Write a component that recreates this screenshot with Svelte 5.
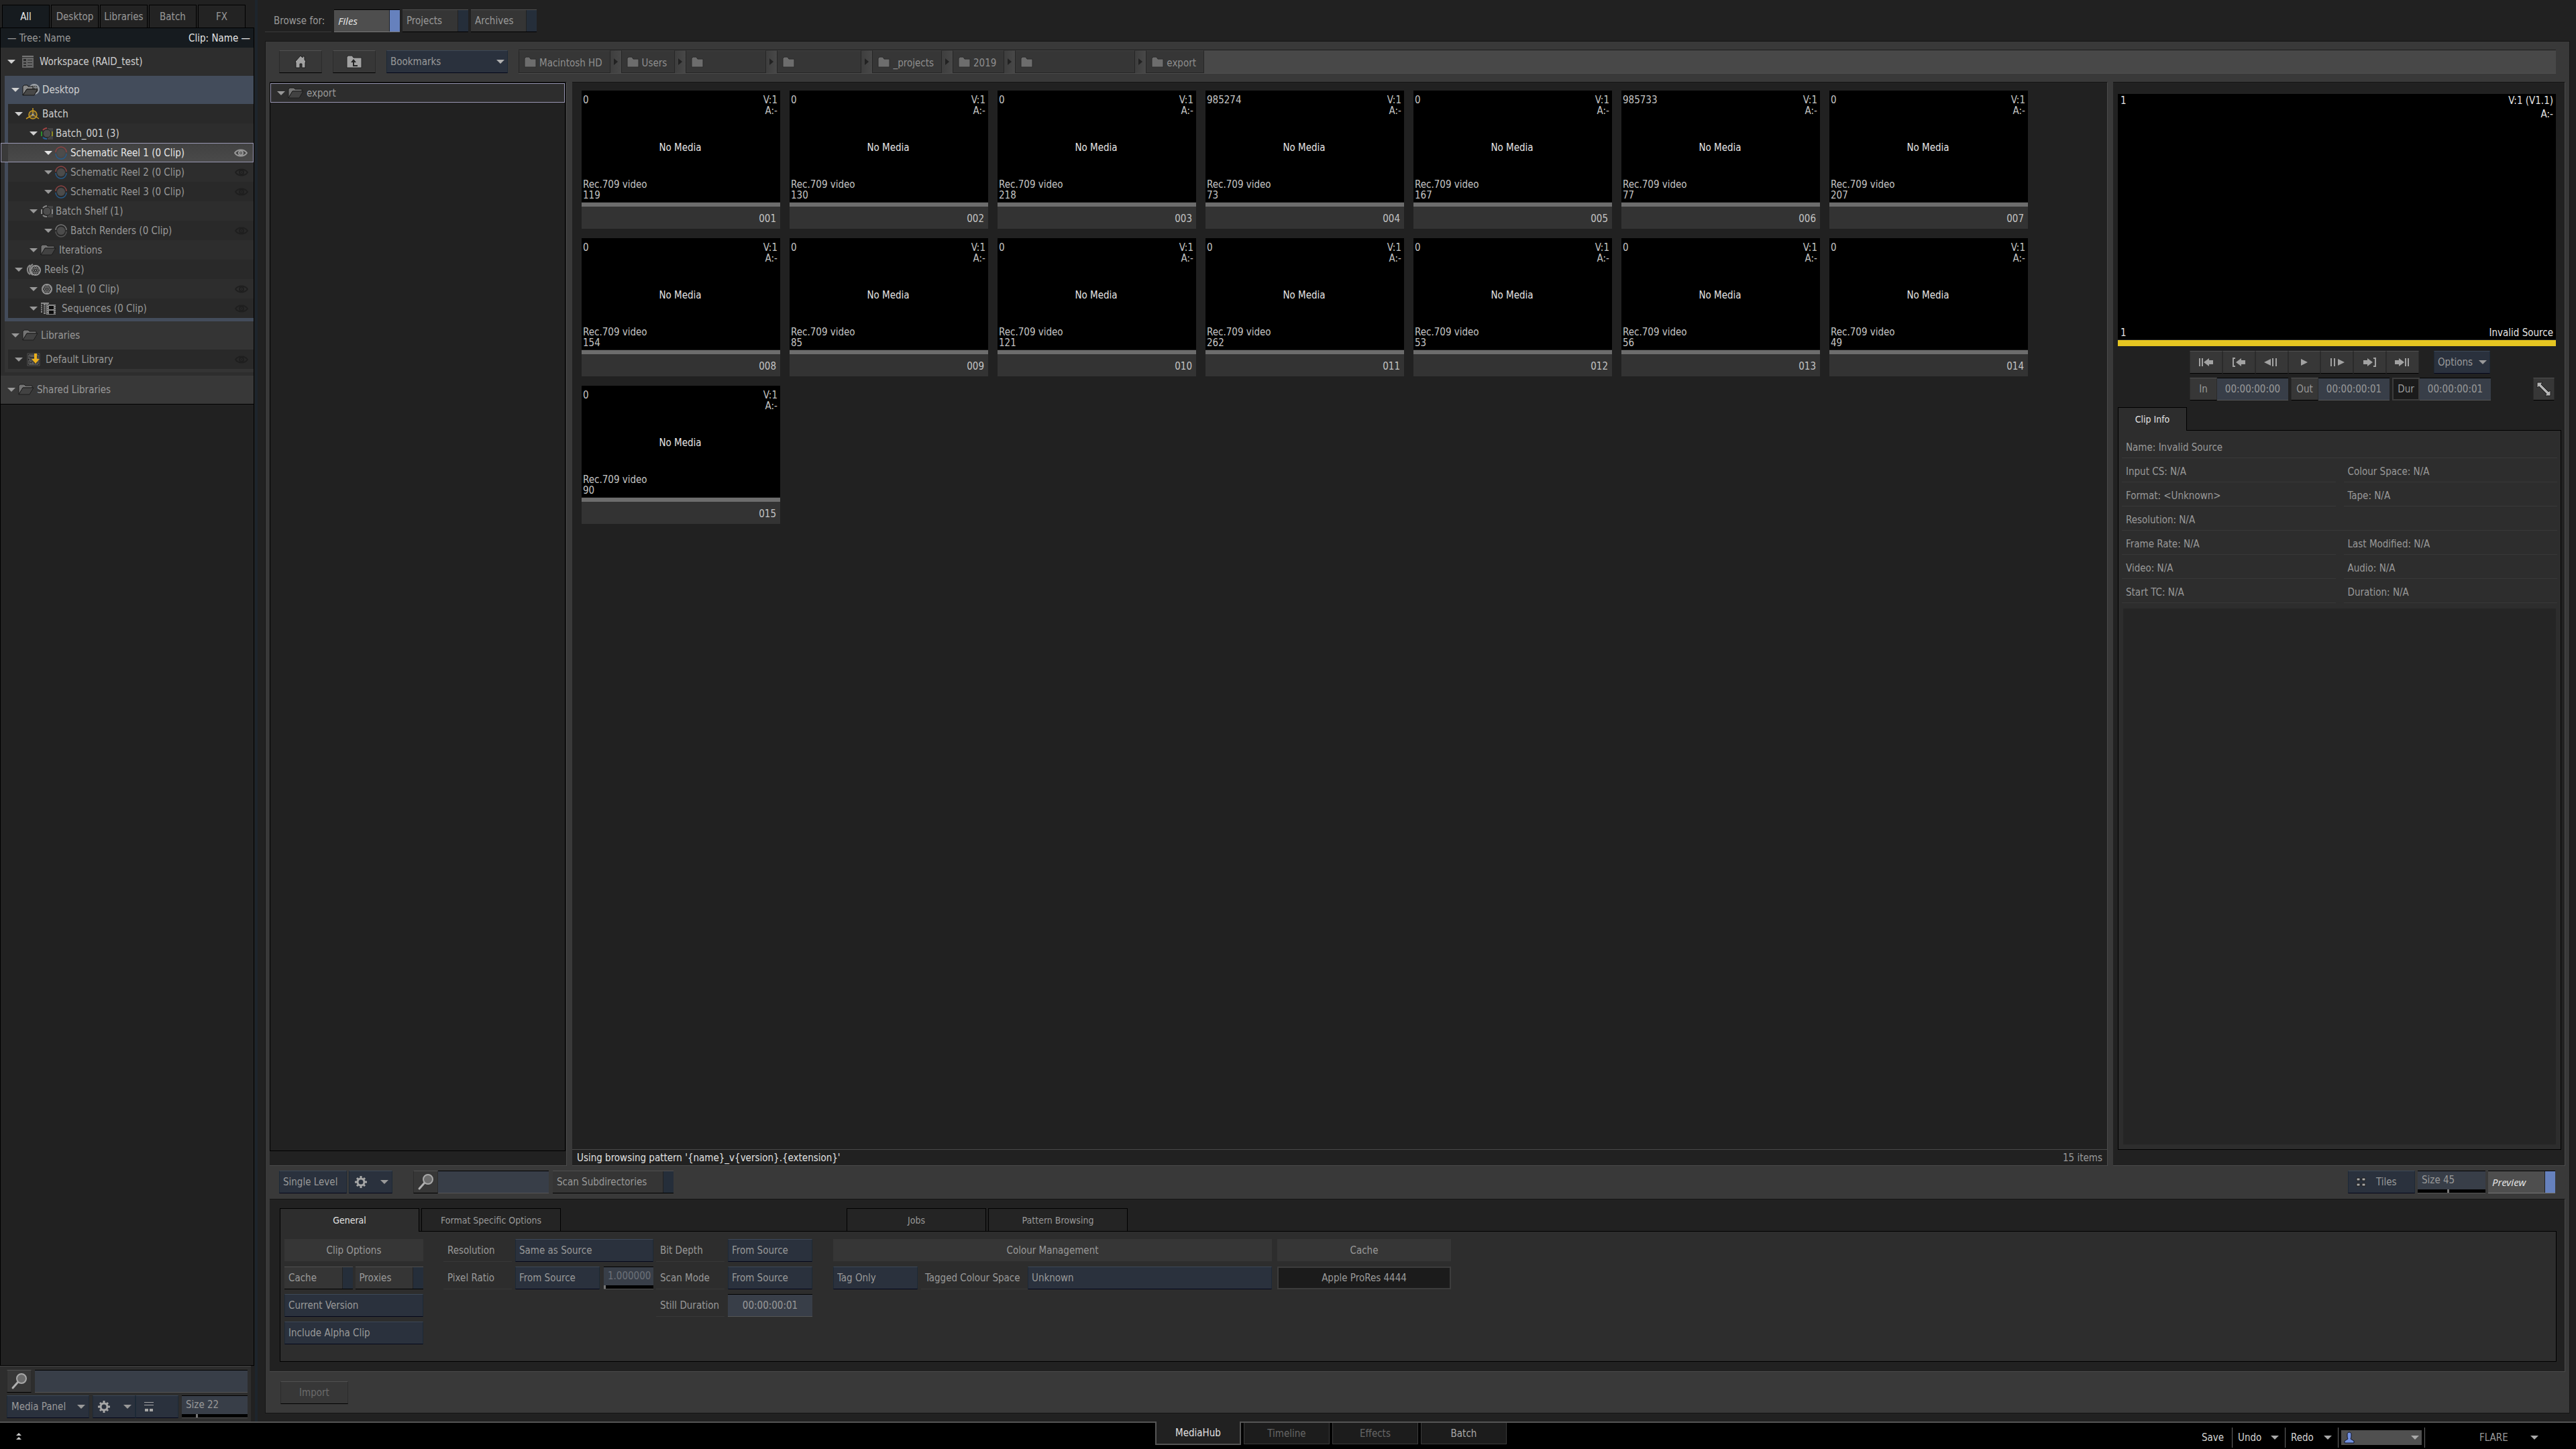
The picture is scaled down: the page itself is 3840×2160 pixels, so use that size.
<script lang="ts">
  type Node = { label: string; icon: string; pad: number; iconWidth: number; tone?: string; eye?: boolean };

  const panelTabs = ['All', 'Desktop', 'Libraries', 'Batch', 'FX'];

  const desktopRows: Node[] = [
    { label: 'Batch', icon: 'batch', pad: 10, iconWidth: 21, tone: 'bright' },
    { label: 'Batch_001 (3)', icon: 'group', pad: 32, iconWidth: 19, tone: 'bright' },
    { label: 'Schematic Reel 1 (0 Clip)', icon: 'schematic', pad: 54, iconWidth: 19, tone: 'selected', eye: true },
    { label: 'Schematic Reel 2 (0 Clip)', icon: 'schematic', pad: 54, iconWidth: 19, eye: true },
    { label: 'Schematic Reel 3 (0 Clip)', icon: 'schematic', pad: 54, iconWidth: 19, eye: true },
    { label: 'Batch Shelf (1)', icon: 'shelf', pad: 32, iconWidth: 19 },
    { label: 'Batch Renders (0 Clip)', icon: 'render', pad: 54, iconWidth: 19, eye: true },
    { label: 'Iterations', icon: 'folder', pad: 32, iconWidth: 24 },
    { label: 'Reels (2)', icon: 'reels', pad: 10, iconWidth: 24 },
    { label: 'Reel 1 (0 Clip)', icon: 'reel', pad: 32, iconWidth: 19, eye: true },
    { label: 'Sequences (0 Clip)', icon: 'sequence', pad: 32, iconWidth: 28, eye: true }
  ];

  const crumbs = [
    { name: 'Macintosh HD' },
    { name: 'Users' },
    { name: '', width: 120 },
    { name: '', width: 126 },
    { name: '_projects' },
    { name: '2019' },
    { name: '', width: 179 },
    { name: 'export' }
  ];

  const clips = [
    ['0', 119], ['0', 130], ['0', 218], ['985274', 73], ['0', 167], ['985733', 77], ['0', 207],
    ['0', 154], ['0', 85], ['0', 121], ['0', 262], ['0', 53], ['0', 56], ['0', 49], ['0', 90]
  ].map(([start, frames], i) => ({ start, frames, name: String(i + 1).padStart(3, '0') }));

  const info = [
    ['Name: Invalid Source'],
    ['Input CS: N/A', 'Colour Space: N/A'],
    ['Format: <Unknown>', 'Tape: N/A'],
    ['Resolution: N/A'],
    ['Frame Rate: N/A', 'Last Modified: N/A'],
    ['Video: N/A', 'Audio: N/A'],
    ['Start TC: N/A', 'Duration: N/A']
  ];

  const transport = [
    { label: 'Go to start', d: 'M4 5h2v12H4zM8 5h2v12H8zM11 11l8-6v3h6v6h-6v3z' },
    { label: 'Go to in', d: 'M5 4h4v2H7v10h2v2H5zM10 11l8-6v3h6v6h-6v3z' },
    { label: 'Step back', d: 'M3 11l10-5v10zM15 5h2v12h-2zM20 5h2v12h-2z' },
    { label: 'Play', d: 'M9 6l10 5-10 5z' },
    { label: 'Step forward', d: 'M4 5h2v12H4zM9 5h2v12H9zM15 6l10 5-10 5z' },
    { label: 'Go to out', d: 'M4 8h6V5l8 6-8 6v-3H4zM19 4h4v14h-4v-2h2V6h-2z' },
    { label: 'Go to end', d: 'M2 8h6V5l8 6-8 6v-3H2zM17 5h2v12h-2zM21 5h2v12h-2z' }
  ];

  const modules = ['MediaHub', 'Timeline', 'Effects', 'Batch'];

  let source = $state('Files');
  let scan = $state(false);
  let preview = $state(true);
  let cache = $state(false);
  let proxies = $state(false);
  let panelSize = $state(22);
  let tileSize = $state(45);
</script>

{#snippet caret()}
  <svg class="caret" viewBox="0 0 12 6" width="12" height="6"><path d="M0 0h12L6 6z" fill="currentColor" /></svg>
{/snippet}

{#snippet reelWheel(cx: number, cy: number)}
  <circle {cx} {cy} r="7" fill="#222" stroke="#969696" stroke-width="2" />
  <circle {cx} {cy} r="1" fill="#969696" />
  {#each [0, 60, 120, 180, 240, 300] as a}
    <circle cx={cx + 4 * Math.sin((a * Math.PI) / 180)} cy={cy - 4 * Math.cos((a * Math.PI) / 180)} r="1.5" fill="#262626" stroke="#8a8a8a" stroke-width="1" />
  {/each}
{/snippet}

{#snippet treeIcon(name: string, width: number)}
  <svg class="tree-icon" viewBox="0 0 {width} 20" {width} height="20" fill="none">
    {#if name === 'workspace'}
      <path d="M6 1h17v2H6z" fill="#777" />
      <path d="M6 4h17v15H6z" fill="#666" />
      <path d="M8 6h4v3H8zM8 11h4v2H8zM8 15h4v2H8zM14 7h7v1h-7zM14 11h7v1h-7zM14 15h7v1h-7z" fill="#2c2c2c" />
    {:else if name === 'desktop'}
      <circle cx="18" cy="9" r="7" fill="#3a3a3a" stroke="#a0a5ab" stroke-width="2" />
      <circle cx="18" cy="5" r="2" fill="#555" stroke="#a0a5ab" />
      <circle cx="22" cy="8" r="2" fill="#555" stroke="#a0a5ab" />
      <circle cx="14" cy="8" r="2" fill="#555" stroke="#a0a5ab" />
      <path d="M1 18V5l2-2h5l1 2h7v4H7z" fill="#8a8a8a" stroke="#151515" />
      <path d="M1 18L7 9h16l-5 9z" fill="#484848" stroke="#151515" />
    {:else if name === 'batch'}
      <circle cx="11" cy="11" r="6" stroke="#c99a22" stroke-width="1.5" fill="#4a4638" />
      <path d="M11 1v10M11 11l-10 6M11 11l9 6" stroke="#c99a22" stroke-width="1.5" />
      <circle cx="11" cy="11" r="1.5" fill="#aaa" />
    {:else if name === 'group' || name === 'shelf'}
      <path d="M11 2h8v17h-8z" fill="#444" />
      <circle cx="10" cy="10" r="6" fill="#4c4c4c" stroke="#222" />
      <path d="M4 5a8 8 0 0 1 6-3" stroke={name === 'group' ? '#a04444' : '#888'} stroke-width="2" />
      <path d="M2 7v7" stroke={name === 'group' ? '#2c8c2c' : '#888'} stroke-width="2" />
      <path d="M4 16a8 8 0 0 0 6 2" stroke={name === 'group' ? '#27649a' : '#888'} stroke-width="2" />
      <path d="M18 7v7" stroke={name === 'group' ? '#8c8a22' : '#888'} stroke-width="2" />
    {:else if name === 'schematic' || name === 'render'}
      <circle cx="9" cy="10" r="6" fill="#4c4c4c" />
      <path d="M1 9a8 8 0 0 1 16 0" stroke={name === 'schematic' ? '#8c4343' : '#777'} stroke-width="1.5" />
      <path d="M1 11a8 8 0 0 0 16 0" stroke={name === 'schematic' ? '#275a88' : '#555'} stroke-width="1.5" />
    {:else if name === 'folder'}
      <path d="M1 17V4l2-2h6l2 2h10v3H7z" fill="#747474" stroke="#1c1c1c" />
      <path d="M1 17L7 7h16l-6 10z" fill="#424242" stroke="#1c1c1c" />
    {:else if name === 'reels'}
      <path d="M7 3a8 8 0 0 0 0 14M11 2a9 9 0 0 0 0 16" stroke="#888" stroke-width="2" />
      {@render reelWheel(15, 11)}
    {:else if name === 'reel'}
      {@render reelWheel(10, 10)}
    {:else if name === 'sequence'}
      <path d="M1 1h12v2H1zM1 1h2v15H1zM5 3h3v15H5zM9 3h2v16H9z" fill="#8a8a8a" />
      <path d="M1 4h2M1 7h2M1 10h2M1 13h2M5 6h3M5 9h3M5 12h3M5 15h3" stroke="#222" />
      <path d="M10 4h13v15H10z" fill="#8a8a8a" />
      <path d="M13 6h7v5h-7zM13 13h7v5h-7z" fill="#0c0c0c" />
      <path d="M11 5v14M22 5v14" stroke="#222" stroke-dasharray="1 2" />
    {:else if name === 'library'}
      <path d="M3 1h18v18H3z" fill="#1c1c1c" stroke="#555" />
      <path d="M5 3h14v6H5zM5 11h14v6H5z" fill="#333" stroke="#777" />
      <path d="M7 5h6M7 13h2M11 13v4M8 15v2" stroke="#888" />
      <path d="M13 1h4v8h4l-6 7-6-7h4z" fill="#eab01c" />
    {/if}
  </svg>
{/snippet}

{#snippet eye()}
  <svg class="eye" viewBox="0 0 20 12" width="20" height="12" fill="none" stroke="currentColor" stroke-width="2">
    <path d="M1 6c4-6 14-6 18 0-4 6-14 6-18 0z" />
    <circle cx="10" cy="6" r="3" />
    <circle cx="10" cy="6" r="1" fill="currentColor" stroke="none" />
  </svg>
{/snippet}

{#snippet magnifier()}
  <svg viewBox="0 0 26 26" width="26" height="26">
    <path d="M3 23l8-9" stroke="#b0b0b0" stroke-width="3" stroke-linecap="round" />
    <circle cx="16" cy="9" r="7" fill="#6c6c6c" stroke="#a8a8a8" stroke-width="2" />
  </svg>
{/snippet}

{#snippet gear()}
  <svg viewBox="0 0 20 20" width="20" height="20" fill="none" stroke="#a6a6a6">
    <circle cx="10" cy="10" r="5" stroke-width="3" />
    <path d="M10 1v4M10 15v4M1 10h4M15 10h4M4 4l2 2M14 14l2 2M16 4l-2 2M6 14l-2 2" stroke-width="3" />
  </svg>
{/snippet}

{#snippet folder()}
  <svg class="folder" viewBox="0 0 20 17" width="20" height="17"><path d="M1 3l2-2h5l2 3h8v12H1z" fill="#6d6d6d" stroke="#2a2a2a" /></svg>
{/snippet}

{#snippet treeRow(node: Node)}
  <li class="row {node.tone ?? ''}" style="padding-left: {node.pad}px">
    {@render caret()}
    {@render treeIcon(node.icon, node.iconWidth)}
    <span class="row-label">{node.label}</span>
    {#if node.eye}{@render eye()}{/if}
  </li>
{/snippet}

<div class="app">
  <div class="workspace">
    <aside class="media-panel">
      <div class="panel-tabs" role="tablist">
        {#each panelTabs as tab, i}
          <button class="panel-tab" class:active={i === 0} role="tab" aria-selected={i === 0}>{tab}</button>
        {/each}
      </div>
      <div class="tree">
        <div class="tree-header">
          <span>— Tree: Name</span>
          <span class="clip-col">Clip: Name —</span>
        </div>
        <ul class="heading workspace-row">
          {@render treeRow({ label: 'Workspace (RAID_test)', icon: 'workspace', pad: 10, iconWidth: 28, tone: 'bright' })}
        </ul>
        <div class="desktop-group">
          <ul class="heading">
            {@render treeRow({ label: 'Desktop', icon: 'desktop', pad: 10, iconWidth: 26, tone: 'bright' })}
          </ul>
          <ul class="rows">
            {#each desktopRows as node}
              {@render treeRow(node)}
            {/each}
          </ul>
        </div>
        <div class="library-group">
          <ul class="heading">
            {@render treeRow({ label: 'Libraries', icon: 'folder', pad: 10, iconWidth: 24 })}
          </ul>
          <ul class="rows">
            {@render treeRow({ label: 'Default Library', icon: 'library', pad: 10, iconWidth: 26, eye: true })}
          </ul>
        </div>
        <ul class="heading shared">
          {@render treeRow({ label: 'Shared Libraries', icon: 'folder', pad: 10, iconWidth: 24 })}
        </ul>
        <div class="tree-empty"></div>
      </div>
      <div class="panel-tools">
        <div class="tool-line">
          <button class="btn search-btn" aria-label="Search">{@render magnifier()}</button>
          <input class="field grow" type="text" aria-label="Search media" />
        </div>
        <div class="tool-line">
          <button class="btn blue media-menu">Media Panel {@render caret()}</button>
          <div class="joined">
            <button class="btn blue gear-menu" aria-label="Panel settings">{@render gear()}{@render caret()}</button>
            <button class="btn blue view-menu" aria-label="View mode">
              <svg viewBox="0 0 16 18" width="16" height="18"><path d="M1 2h14v1H1zM1 6h14v1H1zM2 12h5v4H2zM9 12h5v4H9z" fill="#a6a6a6" /></svg>
            </button>
          </div>
          <label class="field slider grow">
            <span>Size {panelSize}</span>
            <input type="range" min="0" max="100" bind:value={panelSize} />
          </label>
        </div>
      </div>
    </aside>

    <main>
      <div class="browse">
        <span class="browse-label">Browse for:</span>
        {#each ['Files', 'Projects', 'Archives'] as name}
          <label class="toggle">
            <input type="radio" name="source" value={name} bind:group={source} />
            <span class="toggle-text">{name}</span>
            <span class="lamp"></span>
          </label>
        {/each}
      </div>

      <div class="frame">
        <div class="nav">
          <button class="btn nav-btn" aria-label="Home">
            <svg viewBox="0 0 20 20" width="20" height="20"><path d="M2 10l8-9 3 3V2h3v5l2 3-1 1v8h-5v-6H9v6H3v-8z" fill="#a2a2a2" stroke="#1c1c1c" /></svg>
          </button>
          <button class="btn nav-btn" aria-label="Parent folder">
            <svg viewBox="0 0 24 20" width="24" height="20"><path d="M1 3l2-2h6l2 3h12v15H1z" fill="#a2a2a2" stroke="#242424" /><path d="M7 11l4-5 4 5h-3v4h5v2h-7v-6z" fill="#262626" /></svg>
          </button>
          <select class="btn blue bookmarks" aria-label="Bookmarks"><option>Bookmarks</option></select>
          <nav class="crumbs" aria-label="Path">
            {#each crumbs as crumb, i}
              {#if i > 0}<span class="crumb-sep"></span>{/if}
              <a class="crumb" href="#level-{i}" aria-label={crumb.name || 'Folder'} style:width={crumb.width ? `${crumb.width}px` : null}>
                {@render folder()}<span class="crumb-name">{crumb.name}</span>
              </a>
            {/each}
          </nav>
        </div>

        <div class="panes">
          <section class="pane folders">
            <ul class="folder-tree">
              <li>{@render caret()}{@render treeIcon('folder', 24)}export</li>
            </ul>
          </section>

          <section class="pane browser">
            <div class="clips">
              {#each clips as clip}
                <article class="clip">
                  <div class="thumb">
                    <div class="thumb-line"><span>{clip.start}</span><span class="tracks">V:1<br />A:-</span></div>
                    <div class="no-media">No Media</div>
                    <div class="thumb-foot">Rec.709 video<br />{clip.frames}</div>
                  </div>
                  <div class="clip-name">{clip.name}</div>
                </article>
              {/each}
            </div>
            <div class="status">
              <span>{"Using browsing pattern '{name}_v{version}.{extension}'"}</span>
              <span class="count">15 items</span>
            </div>
          </section>

          <section class="pane preview">
            <div class="viewer">
              <div class="viewer-line"><span>1</span><span class="tracks">V:1 (V1.1)<br />A:-</span></div>
              <div class="viewer-line"><span>1</span><span>Invalid Source</span></div>
            </div>
            <div class="progress"></div>
            <div class="controls">
              <div class="control-line">
                <div class="transport">
                  {#each transport as item}
                    <button class="btn" aria-label={item.label}>
                      <svg viewBox="0 0 28 22" width="28" height="22"><path d={item.d} fill="#a2a2a2" /></svg>
                    </button>
                  {/each}
                </div>
                <button class="btn blue options">Options {@render caret()}</button>
              </div>
              <div class="control-line timecodes">
                <div class="timecode"><button class="btn">In</button><input class="field" aria-label="In point" value="00:00:00:00" /></div>
                <div class="timecode"><button class="btn">Out</button><input class="field" aria-label="Out point" value="00:00:00:01" /></div>
                <div class="timecode"><button class="btn locked">Dur</button><input class="field" aria-label="Duration" value="00:00:00:01" /></div>
                <button class="btn expand" aria-label="Expand">
                  <svg viewBox="0 0 22 22" width="22" height="22"><path d="M1 1h8L7 4l11 11 3-2v8h-8l2-3L4 7 1 9z" fill="#b4b4b4" stroke="#1a1a1a" /></svg>
                </button>
              </div>
            </div>
            <div class="tab-strip"><button class="tab active info-tab">Clip Info</button></div>
            <div class="info">
              {#each info as pair}
                <div class="info-line">
                  {#each pair as text}<span>{text}</span>{/each}
                </div>
              {/each}
              <div class="info-empty"></div>
            </div>
          </section>
        </div>

        <div class="toolbar">
          <select class="btn blue level" aria-label="Levels"><option>Single Level</option></select>
          <button class="btn blue browse-gear" aria-label="Browse settings">{@render gear()}{@render caret()}</button>
          <div class="joined find">
            <button class="btn search-btn" aria-label="Find">{@render magnifier()}</button>
            <input class="field" type="text" aria-label="Find files" />
          </div>
          <label class="toggle scan">
            <input type="checkbox" bind:checked={scan} />
            <span class="toggle-text">Scan Subdirectories</span>
            <span class="lamp"></span>
          </label>
          <div class="toolbar-end">
            <button class="btn blue tiles">
              <svg viewBox="0 0 16 16" width="16" height="16"><path d="M1 2h5v4H1zM9 2h5v4H9zM1 10h5v4H1zM9 10h5v4H9z" fill="#a6a6a6" stroke="#1c1c1c" /></svg>
              Tiles
            </button>
            <label class="field slider tile-size">
              <span>Size {tileSize}</span>
              <input type="range" min="0" max="100" bind:value={tileSize} />
            </label>
            <label class="toggle preview-toggle">
              <input type="checkbox" bind:checked={preview} />
              <span class="toggle-text">Preview</span>
              <span class="lamp"></span>
            </label>
          </div>
        </div>

        <div class="settings">
          <div class="tab-strip">
            <button class="tab active">General</button>
            <button class="tab">Format Specific Options</button>
            <button class="tab jobs">Jobs</button>
            <button class="tab">Pattern Browsing</button>
          </div>
          <div class="general">
            <div class="clip-options">
              <h3 class="group-title">Clip Options</h3>
              <div class="pair">
                <label class="toggle"><input type="checkbox" bind:checked={cache} /><span class="toggle-text">Cache</span><span class="lamp"></span></label>
                <label class="toggle"><input type="checkbox" bind:checked={proxies} /><span class="toggle-text">Proxies</span><span class="lamp"></span></label>
              </div>
              <select class="btn blue" aria-label="Version"><option>Current Version</option></select>
              <select class="btn blue" aria-label="Alpha"><option>Include Alpha Clip</option></select>
            </div>

            <div class="format resolution">
              <label class="caption" for="resolution">Resolution</label>
              <select class="btn blue" id="resolution"><option>Same as Source</option></select>
              <label class="caption" for="ratio">Pixel Ratio</label>
              <div class="ratio">
                <select class="btn blue" id="ratio"><option>From Source</option></select>
                <div class="field slider ratio-value">
                  <span>1.000000</span>
                  <input type="range" min="0" max="100" value="0" aria-label="Pixel ratio value" />
                </div>
              </div>
            </div>

            <div class="format depth">
              <label class="caption" for="depth">Bit Depth</label>
              <select class="btn blue" id="depth"><option>From Source</option></select>
              <label class="caption" for="scan-mode">Scan Mode</label>
              <select class="btn blue" id="scan-mode"><option>From Source</option></select>
              <label class="caption" for="still">Still Duration</label>
              <input class="field" id="still" value="00:00:00:01" />
            </div>

            <div class="colour">
              <h3 class="group-title">Colour Management</h3>
              <select class="btn blue" aria-label="Colour rule"><option>Tag Only</option></select>
              <label class="caption" for="space">Tagged Colour Space</label>
              <select class="btn blue" id="space"><option>Unknown</option></select>
            </div>

            <div class="cache">
              <h3 class="group-title">Cache</h3>
              <button class="btn locked">Apple ProRes 4444</button>
            </div>
          </div>
        </div>

        <div class="actions"><button class="btn import" disabled>Import</button></div>
      </div>
    </main>
  </div>

  <footer>
    <div class="footer-start">
      <button class="plain" aria-label="Collapse">
        <svg viewBox="0 0 10 12" width="10" height="12"><path d="M5 1l4 4H1zM5 7l4 4H1z" fill="#c8c8c8" /></svg>
      </button>
    </div>
    <div class="modules">
      {#each modules as name, i}
        <button class="module" class:active={i === 0} class:idle={i === 1 || i === 2}>{name}</button>
      {/each}
    </div>
    <div class="footer-end">
      <button class="plain save">Save</button>
      <button class="plain split">Undo {@render caret()}</button>
      <button class="plain split">Redo {@render caret()}</button>
      <div class="user-slot">
        <button class="plain user" aria-label="User">
          <svg viewBox="0 0 18 18" width="18" height="18"><path d="M6 4c0-4 6-4 6 0 0 3 0 5-1 7l5 3v3H2v-3l5-3c-1-2-1-4-1-7z" fill="#7391e0" stroke="#10152c" /></svg>
          {@render caret()}
        </button>
      </div>
      <button class="plain product">FLARE {@render caret()}</button>
    </div>
  </footer>
</div>

<style>
  :global(body) {
    background: #212121;
  }

  .app {
    display: flex;
    flex-direction: column;
    min-height: 100vh;
    background: #212121;
    color: #999;
    font-family: 'DejaVu Sans Condensed', 'Noto Sans', sans-serif;
    font-size: 15px;
    line-height: 20px;
  }

  .app :global(*) {
    box-sizing: border-box;
  }

  ul {
    list-style: none;
    margin: 0;
    padding: 0;
  }

  h3 {
    margin: 0;
    font-weight: normal;
  }

  button,
  input,
  select {
    margin: 0;
    padding: 0;
    border: 0;
    border-radius: 0;
    appearance: none;
    background: none;
    color: inherit;
    font: inherit;
  }

  svg {
    display: block;
    flex: none;
  }

  .workspace {
    display: flex;
    flex: 1;
  }

  /* shared controls */

  .btn {
    display: flex;
    align-items: center;
    justify-content: center;
    height: 34px;
    background: #373737;
    border-top: 1px solid #505050;
    border-bottom: 1px solid #000;
    border-left: 1px solid #2b2b2b;
    border-right: 1px solid #2b2b2b;
    white-space: nowrap;
  }

  .blue {
    background: #2a313d;
    border-color: #3c4857 #1d2936 #04061a #1d2936;
  }

  select.btn {
    padding: 0 5px;
  }

  .locked {
    background: #1b1b1b;
    border: 2px solid #3c3c3c;
  }

  .field {
    height: 34px;
    background: #383e48;
    border-top: 1px solid #000;
    border-bottom: 1px solid #555;
    min-width: 0;
  }

  .slider {
    display: flex;
    flex-direction: column;
    justify-content: space-between;
    overflow: hidden;
  }

  .slider span {
    padding: 3px 6px 0;
  }

  .slider input {
    display: block;
    width: 100%;
    height: 5px;
    background: #000;
  }

  .slider input::-webkit-slider-thumb {
    appearance: none;
    width: 3px;
    height: 5px;
    background: #777;
  }

  .toggle {
    display: flex;
    height: 34px;
    border-top: 1px solid #505050;
    border-bottom: 1px solid #000;
    background: #353535;
  }

  .toggle input {
    position: absolute;
    opacity: 0;
  }

  .toggle-text {
    display: flex;
    flex: 1;
    align-items: center;
    padding-left: 6px;
    white-space: nowrap;
  }

  .lamp {
    width: 16px;
    background: #252e3a;
    border-left: 1px solid #222;
  }

  .toggle:has(input:checked) {
    background: #4e4e4e;
    border-color: #000 #4e4e4e #777;
    color: #e0e0e0;
    font-family: 'Noto Sans', sans-serif;
    font-style: italic;
  }

  .toggle input:checked ~ .lamp {
    background: #6681bd;
  }

  .joined {
    display: flex;
  }

  .grow {
    flex: 1;
  }

  .search-btn {
    width: 37px;
  }

  /* media panel */

  .media-panel {
    display: flex;
    flex-direction: column;
    flex: none;
    width: 384px;
    border-right: 4px solid #1d252c;
  }

  .panel-tabs {
    display: flex;
    gap: 2px;
    padding: 7px 0 0 3px;
  }

  .panel-tab {
    width: 71px;
    height: 34px;
    background: #232323;
    border: 1px solid #000;
    border-bottom: 0;
  }

  .panel-tab.active {
    background: #161b1f;
    color: #e4e4e4;
  }

  .tree {
    display: flex;
    flex: 1;
    flex-direction: column;
    margin-right: 1px;
    border: 1px solid #000;
    background: #2d2d2d;
  }

  .tree-header {
    display: flex;
    justify-content: space-between;
    align-items: center;
    height: 29px;
    padding: 0 5px 0 10px;
    background: #161b1f;
  }

  .clip-col {
    color: #e4e4e4;
  }

  .row {
    display: flex;
    align-items: center;
    height: 29px;
    color: #989898;
  }

  .row .caret {
    margin-right: 4px;
  }

  .row-label {
    flex: 1;
    padding-left: 4px;
    white-space: nowrap;
  }

  .rows .row:nth-child(odd) {
    background: #292929;
  }

  .rows .row:nth-child(even) {
    background: #2d2d2d;
  }

  .heading .row {
    height: 42px;
  }

  .bright {
    color: #d0d0d0;
  }

  .rows .row.selected {
    margin-left: -11px;
    border: 1px solid #9a98b4;
    background: linear-gradient(#414141, #4a4a4a);
    color: #e6e6e6;
    /* darker where the outline reaches over the group edge */
    box-shadow: inset 10px 0 #3a3a3a;
  }

  .rows .row.selected .caret {
    margin-left: 10px;
  }

  .eye {
    margin-right: 8px;
    color: #1f1f1f;
  }

  .selected .eye {
    color: #999;
  }

  .desktop-group {
    margin-left: 6px;
    padding-bottom: 5px;
    background: #434c5b;
  }

  .library-group {
    margin: 0 0 5px 6px;
    padding-bottom: 5px;
    background: #343434;
  }

  .desktop-group .rows,
  .library-group .rows {
    margin-left: 5px;
  }

  .shared {
    background: #383838;
    border-bottom: 1px solid #000;
  }

  .tree-empty {
    flex: 1;
    background: #212121;
  }

  .panel-tools {
    display: flex;
    flex-direction: column;
    gap: 4px;
    margin-right: 6px;
    padding: 5px 5px 5px 10px;
    border-top: 1px solid #444;
    background: #2d2d2d;
  }

  .tool-line {
    display: flex;
    gap: 5px;
  }

  .media-menu {
    justify-content: space-between;
    width: 123px;
    padding: 0 5px 0 6px;
  }

  .gear-menu {
    justify-content: space-between;
    width: 64px;
    padding: 0 5px 0 6px;
  }

  .view-menu {
    justify-content: flex-start;
    width: 64px;
    padding-left: 11px;
  }

  /* browser */

  main {
    display: flex;
    flex: 1;
    flex-direction: column;
    min-width: 0;
    padding: 0 9px 12px 11px;
  }

  .browse {
    display: flex;
    gap: 4px;
    padding: 14px 0 13px;
  }

  .browse-label {
    display: flex;
    align-items: center;
    width: 99px;
    padding-left: 13px;
    border-bottom: 1px solid #3a3a3a;
  }

  .browse .toggle {
    width: 98px;
  }

  .frame {
    display: flex;
    flex: 1;
    flex-direction: column;
    border: 1px solid #151515;
    background: #393939;
  }

  .nav {
    display: flex;
    align-items: center;
    padding: 12px 20px 12px 20px;
  }

  .nav-btn {
    width: 64px;
    margin-right: 16px;
  }

  .nav select.bookmarks {
    width: 181px;
    margin-right: 16px;
    background: #2a313d url("data:image/svg+xml,%3Csvg xmlns='http://www.w3.org/2000/svg' viewBox='0 0 12 6'%3E%3Cpath d='M0 0h12L6 6z' fill='%23b0b0b0'/%3E%3C/svg%3E") no-repeat right 4px center / 12px 6px;
  }

  .crumbs {
    display: flex;
    flex: 1;
    height: 36px;
    border-top: 1px solid #1c1c1c;
    border-bottom: 1px solid #4c4c4c;
    background: #484848;
  }

  .crumb {
    display: flex;
    align-items: center;
    gap: 3px;
    padding: 0 11px 0 7px;
    border: 1px solid #262626;
    border-top-color: #444;
    background: #363636;
    color: #8e8e8e;
    text-decoration: none;
    white-space: nowrap;
  }

  .crumb-name {
    padding-top: 4px;
  }

  .crumb-sep {
    display: flex;
    align-items: center;
    justify-content: center;
    width: 16px;
    background: linear-gradient(90deg, #3e3e3e, #484848);
  }

  .crumb-sep::before {
    content: '';
    border: 5px solid transparent;
    border-left: 6px solid #222;
    border-right: 0;
  }

  .panes {
    display: flex;
    flex: 1;
    gap: 8px;
    padding: 0 6px;
  }

  .pane {
    display: flex;
    flex-direction: column;
    border: 1px solid #4a4a4a;
    border-top-color: #151515;
    border-left: 0;
    background: #212121;
  }

  .folders {
    flex: none;
    width: 443px;
    padding-bottom: 21px;
  }

  .folder-tree {
    flex: 1;
    margin-right: 1px;
    border: 1px solid #000;
  }

  .folder-tree li {
    display: flex;
    align-items: center;
    gap: 4px;
    height: 29px;
    padding-left: 9px;
    border: 1px solid #9a98b4;
    background: #2d2d2d;
  }

  .browser {
    flex: 1;
    min-width: 0;
  }

  .clips {
    display: grid;
    flex: 1;
    grid-template-columns: repeat(auto-fill, 296px);
    align-content: start;
    gap: 14px;
    padding: 12px 100px 12px 14px;
  }

  .thumb {
    display: flex;
    flex-direction: column;
    justify-content: space-between;
    height: 167px;
    padding: 6px 4px 2px 2px;
    border-bottom: 1px solid #181818;
    background: #000;
    color: #c4c4c4;
    line-height: 16px;
  }

  .thumb-line,
  .viewer-line {
    display: flex;
    justify-content: space-between;
  }

  .tracks {
    text-align: right;
  }

  .no-media {
    text-align: center;
    color: #e4e4e4;
  }

  .clip-name {
    height: 39px;
    padding: 8px 6px 0 0;
    border-top: 6px solid #6d6d6d;
    background: #333;
    color: #c4c4c4;
    text-align: right;
  }

  .status {
    display: flex;
    align-items: center;
    justify-content: space-between;
    height: 24px;
    padding: 0 7px;
    border-top: 1px solid #4a4a4a;
    color: #e0e0e0;
  }

  .count {
    color: #999;
  }

  /* preview */

  .preview {
    flex: none;
    width: 674px;
    padding: 17px 5px 23px 7px;
  }

  .viewer {
    display: flex;
    flex-direction: column;
    justify-content: space-between;
    aspect-ratio: 654 / 367;
    margin-right: 8px;
    padding: 0 4px;
    background: #000;
    color: #e4e4e4;
  }

  .progress {
    height: 10px;
    margin-right: 8px;
    border-top: 1px solid #222;
    background: #e5c521;
  }

  .controls {
    display: flex;
    flex-direction: column;
    gap: 6px;
    padding: 7px 10px 10px 107px;
  }

  .control-line {
    display: flex;
    gap: 22px;
  }

  .transport {
    display: flex;
    width: 342px;
  }

  .transport .btn {
    flex: 1;
  }

  .options {
    justify-content: space-between;
    width: 84px;
    padding: 0 4px 0 5px;
  }

  .timecodes {
    gap: 4px;
  }

  .timecode {
    display: flex;
    width: 147px;
  }

  .timecode .btn {
    width: 41px;
  }

  .timecode .field {
    width: 106px;
    text-align: center;
  }

  .expand {
    width: 32px;
    margin-left: auto;
  }

  .tab-strip {
    display: flex;
    gap: 3px;
  }

  .tab {
    width: 208px;
    height: 34px;
    border: 1px solid #000;
    border-bottom: 0;
    background: #242424;
    font-size: 14px;
  }

  .tab.active {
    position: relative;
    height: 35px;
    margin-bottom: -1px;
    background: #2d2d2d;
    color: #e4e4e4;
  }

  .info-tab {
    width: 103px;
  }

  .info {
    display: flex;
    flex: 1;
    flex-direction: column;
    padding: 5px;
    border: 1px solid #000;
    background: #2d2d2d;
  }

  .info-line {
    display: flex;
    gap: 12px;
  }

  .info-line span {
    flex: 1;
    height: 36px;
    padding: 10px 6px 0;
    border-bottom: 1px solid #383838;
  }

  .info-empty {
    flex: 1;
    margin: 8px 2px 2px;
    background: #252525;
  }

  /* toolbar */

  .toolbar {
    display: flex;
    padding: 7px 21px 8px 20px;
  }

  .level {
    width: 101px;
    margin-right: 3px;
  }

  .browse-gear {
    justify-content: space-between;
    width: 65px;
    padding: 0 5px 0 7px;
  }

  .find {
    margin: 0 6px 0 31px;
  }

  .find .field {
    width: 165px;
  }

  .scan {
    width: 180px;
  }

  .toolbar-end {
    display: flex;
    gap: 4px;
    margin-left: auto;
  }

  .tiles {
    justify-content: flex-start;
    gap: 14px;
    width: 100px;
    padding-left: 11px;
  }

  .tile-size {
    width: 101px;
  }

  .preview-toggle {
    width: 100px;
  }

  /* import settings */

  .settings {
    margin: 0 6px;
    padding: 13px 12px 14px 15px;
    border: 1px solid #4a4a4a;
    border-top-color: #151515;
    border-left: 0;
    background: #212121;
  }

  .jobs {
    margin-left: 423px;
  }

  .general {
    display: flex;
    align-items: flex-start;
    padding: 11px 6px 25px;
    border: 1px solid #000;
    background: #2d2d2d;
  }

  .clip-options,
  .cache {
    display: grid;
    gap: 7px;
  }

  .clip-options {
    width: 207px;
    margin-right: 30px;
  }

  .pair {
    display: grid;
    grid-template-columns: 1fr 1fr;
    gap: 4px;
  }

  .group-title {
    display: flex;
    align-items: center;
    justify-content: center;
    height: 33px;
    margin-bottom: 1px;
    background: #363636;
    font-size: 15px;
  }

  .format {
    display: grid;
    gap: 7px 5px;
  }

  .resolution {
    grid-template-columns: 102px 206px;
    margin-right: 4px;
  }

  .depth {
    grid-template-columns: 102px 126px;
    margin-right: 31px;
  }

  .depth .field {
    text-align: center;
  }

  .caption {
    display: flex;
    align-items: center;
    height: 34px;
    padding-left: 6px;
    border-bottom: 1px solid #383838;
    white-space: nowrap;
  }

  .ratio {
    display: flex;
    gap: 6px;
  }

  .ratio select {
    width: 126px;
  }

  .ratio-value {
    width: 74px;
    color: #6c7178;
  }

  .colour {
    display: grid;
    grid-template-columns: 126px 164px 1fr;
    row-gap: 7px;
    width: 654px;
    margin-right: 8px;
  }

  .colour .group-title {
    grid-column: 1 / -1;
  }

  .colour .caption {
    margin-left: 5px;
  }

  .cache {
    width: 259px;
  }

  .actions {
    padding: 14px 22px 13px;
  }

  .import {
    width: 101px;
    color: #6a6a6a;
  }

  /* footer */

  footer {
    display: flex;
    height: 41px;
    border-top: 2px solid #555;
    background: #000;
  }

  .footer-start {
    display: flex;
    flex: 1;
    align-items: center;
    padding-left: 23px;
  }

  .modules {
    display: flex;
    gap: 4px;
  }

  .module {
    width: 128px;
    height: 32px;
    border: 1px solid #3c3c3c;
    border-top: 0;
    background: #1c1c1c;
    color: #a8a8a8;
  }

  .module.idle {
    color: #666;
  }

  .module.active {
    height: 35px;
    margin-top: -2px;
    border: 2px solid #555;
    border-top: 0;
    background: #212121;
    color: #e0e0e0;
  }

  .footer-end {
    display: flex;
    align-items: center;
    justify-content: flex-end;
    width: 1594px;
    padding: 4px 56px 0 0;
    color: #d4d4d4;
  }

  .footer-end > * {
    height: 30px;
  }

  .plain {
    display: flex;
    align-items: center;
    justify-content: space-between;
  }

  .save {
    width: 45px;
  }

  .split {
    width: 79px;
    padding: 0 9px 0 8px;
    border-left: 1px solid #666;
  }

  .user-slot {
    padding: 4px;
    border-left: 1px solid #666;
    border-right: 1px solid #666;
  }

  .user {
    width: 120px;
    height: 22px;
    padding: 0 4px 0 3px;
    background: #505050;
  }

  .product {
    width: 169px;
    padding-left: 81px;
    color: #999;
  }

  .footer-end .caret {
    color: #aaa;
  }
</style>
